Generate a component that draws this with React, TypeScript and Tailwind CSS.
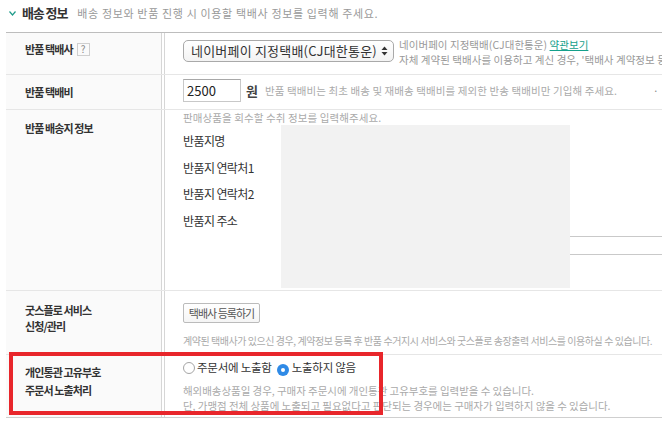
import React from 'react';

const font = 'font-["Noto_Sans_CJK_KR","Noto_Sans",sans-serif]';

function Radio({ checked }: { checked?: boolean }) {
  return checked ? (
    <span className="inline-flex h-[12px] w-[12px] items-center justify-center rounded-full bg-[#2f8ae6]">
      <span className="h-[4px] w-[4px] rounded-full bg-white"></span>
    </span>
  ) : (
    <span className="inline-block h-[12px] w-[12px] rounded-full border border-[#a5a5a5] bg-white"></span>
  );
}

function Label({ children }: { children: React.ReactNode }) {
  return (
    <div className="w-[156px] shrink-0 bg-[#fafafa] border-r border-[#d6d6d6] pl-[19px] text-[11px] font-bold tracking-[-0.9px] text-[#333]">
      {children}
    </div>
  );
}

export default function App() {
  return (
    <div className={`relative h-[429px] w-[662px] overflow-hidden bg-white ${font}`}>
      {/* section title */}
      <div className="flex h-[32px] items-center pb-[6px] pl-[9px]">
        <svg width="7" height="5" viewBox="0 0 7 5" className="mr-[6px]">
          <polyline points="0.5,0.5 3.5,4 6.5,0.5" fill="none" stroke="#1f9b8a" strokeWidth="1.2" />
        </svg>
        <span className="text-[13px] font-bold tracking-[-1.1px] text-[#333]">배송 정보</span>
        <span className="ml-[10px] text-[11px] tracking-[0.65px] text-[#999]">
          배송 정보와 반품 진행 시 이용할 택배사 정보를 입력해 주세요.
        </span>
      </div>

      {/* table */}
      <div className="ml-[6px] w-[720px] border-t border-[#bdbdbd] border-b border-b-[#cfcfcf]">
        {/* 반품 택배사 */}
        <div className="flex h-[42px] border-b border-[#e6e6e6]">
          <Label>
            <div className="flex items-center pt-[8px] leading-4">
              반품 택배사
              <span className="ml-[4px] flex h-[13px] w-[13px] items-center justify-center border border-[#cfcfcf] text-[10px] font-normal tracking-normal text-[#888]">
                ?
              </span>
            </div>
          </Label>
          <div className="ml-[2px] flex flex-1 border-l border-[#d6d6d6] pl-[18px]">
            <div className="mt-[7px] flex h-[22px] w-[211px] shrink-0 items-center justify-between whitespace-nowrap rounded-[5px] border border-[#a9a9a9] bg-gradient-to-b from-white to-[#f3f3f3] pl-[7px] pr-[5px] text-[13px] tracking-[0.2px] text-[#333]">
              <span>네이버페이 지정택배(CJ대한통운)</span>
              <svg width="7" height="10" viewBox="0 0 7 10" className="shrink-0">
                <polygon points="3.5,0.5 6.5,4 0.5,4" fill="#333" />
                <polygon points="0.5,6 6.5,6 3.5,9.5" fill="#333" />
              </svg>
            </div>
            <div className="ml-[5px] whitespace-nowrap pt-[4px] text-[10.5px] leading-[15px] tracking-[0.05px] text-[#999]">
              <div>
                네이버페이 지정택배(CJ대한통운){' '}
                <span className="text-[#14a08b] underline">약관보기</span>
              </div>
              <div>자체 계약된 택배사를 이용하고 계신 경우, '택배사 계약정보 등록하기'를 이용해 주세요.</div>
            </div>
          </div>
        </div>

        {/* 반품 택배비 */}
        <div className="flex h-[35px] border-b border-[#e6e6e6]">
          <Label>
            <div className="pt-[9px] leading-4">반품 택배비</div>
          </Label>
          <div className="ml-[2px] flex flex-1 items-start border-l border-[#d6d6d6] pl-[18px] pt-[4px] whitespace-nowrap">
            <div className="flex h-[23px] w-[58px] items-center border border-[#c8c8c8] border-t-[#a8a8a8] pl-[3px] text-[13px] text-[#222]">
              2500
            </div>
            <span className="ml-[5px] text-[13px] font-bold leading-[23px] text-[#444]">원</span>
            <span className="ml-[7px] text-[10.5px] leading-[23px] tracking-[0.1px] text-[#aaa]">
              반품 택배비는 최초 배송 및 재배송 택배비를 제외한 반송 택배비만 기입해 주세요.
            </span>
            <span className="ml-[36px] text-[10px] leading-[23px] text-[#888]">·</span>
          </div>
        </div>

        {/* 반품 배송지 정보 */}
        <div className="flex h-[181px] border-b border-[#e6e6e6]">
          <Label>
            <div className="pt-[10px] leading-4">반품 배송지 정보</div>
          </Label>
          <div className="ml-[2px] flex-1 border-l border-[#d6d6d6] pl-[18px] pt-[1px]">
            <div className="text-[10.5px] leading-[14px] tracking-[0.1px] text-[#aaa]">
              판매상품을 회수할 수취 정보를 입력해주세요.
            </div>
            <div className="flex">
              <div className="mt-[3px] w-[98px] shrink-0 text-[12px] leading-[26.5px] tracking-[-0.6px] text-[#333]">
                <div>반품지명</div>
                <div>반품지 연락처1</div>
                <div>반품지 연락처2</div>
                <div>반품지 주소</div>
              </div>
              <div className="h-[163px] w-[289px] shrink-0 bg-[#f2f2f2]"></div>
              <div className="mt-[111px] h-[19px] flex-1 border-y border-[#c9c9c9]"></div>
            </div>
          </div>
        </div>

        {/* 굿스플로 서비스 */}
        <div className="flex h-[64px] border-b border-[#e6e6e6]">
          <Label>
            <div className="pt-[11px] leading-4">
              굿스플로 서비스
              <br />
              신청/관리
            </div>
          </Label>
          <div className="ml-[2px] flex-1 border-l border-[#d6d6d6] pl-[18px] pt-[12px]">
            <div className="flex h-[20px] w-[77px] items-center justify-center rounded-[2px] border border-[#bbb] bg-gradient-to-b from-white to-[#f5f5f5] text-[11px] tracking-[-1px] text-[#555]">
              택배사 등록하기
            </div>
            <div className="mt-[11px] whitespace-nowrap text-[10px] leading-[14px] tracking-[-0.45px] text-[#aaa]">
              계약된 택배사가 있으신 경우, 계약정보 등록 후 반품 수거지시 서비스와 굿스플로 송장출력 서비스를 이용하실 수 있습니다.
            </div>
          </div>
        </div>

        {/* 개인통관 고유부호 */}
        <div className="flex h-[62px]">
          <Label>
            <div className="pt-[8px] leading-[18px]">
              개인통관 고유부호
              <br />
              주문서 노출처리
            </div>
          </Label>
          <div className="ml-[2px] flex-1 border-l border-[#d6d6d6] pl-[18px] pt-[5px]">
            <div className="flex h-[16px] items-center text-[11.5px] tracking-[-0.25px] text-[#333]">
              <Radio />
              <span className="ml-[2px]">주문서에 노출함</span>
              <span className="ml-[5px]">
                <Radio checked />
              </span>
              <span className="ml-[3px]">노출하지 않음</span>
            </div>
            <div className="mt-[7px] whitespace-nowrap text-[10.5px] leading-[15px] tracking-[-0.05px] text-[#aaa]">
              <div>해외배송상품일 경우, 구매자 주문시에 개인통관 고유부호를 입력받을 수 있습니다.</div>
              <div>단, 가맹점 전체 상품에 노출되고 필요없다고 판단되는 경우에는 구매자가 입력하지 않을 수 있습니다.</div>
            </div>
          </div>
        </div>
      </div>

      {/* highlight */}
      <div className="absolute left-[9px] top-[352px] h-[63px] w-[374px] border-4 border-[#e8262b]"></div>
    </div>
  );
}
